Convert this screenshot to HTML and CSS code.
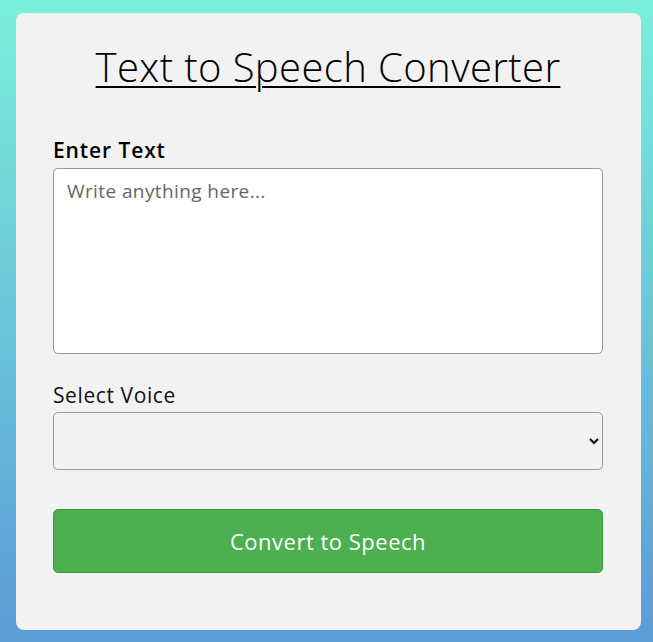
FILE: index.html
```html
<!DOCTYPE html>
<html lang="en">
<head>
<meta charset="utf-8">
<title>Text to Speech Converter</title>
<link rel="stylesheet" href="styles.css">
</head>
<body>
<main class="card">
  <h1 class="title">Text to Speech Converter</h1>
  <label class="label label-strong" for="text">Enter Text</label>
  <textarea id="text" class="textarea" placeholder="Write anything here..."></textarea>
  <label class="label label-voice" for="voice">Select Voice</label>
  <select id="voice" class="select"></select>
  <button class="button" type="button">Convert to Speech</button>
</main>
</body>
</html>
```
FILE: styles.css
```css
html, body {
  margin: 0;
  height: 100%;
}
body {
  background: linear-gradient(180deg, #7af0db 0%, #5a9bd8 100%);
  font-family: "Open Sans", sans-serif;
  padding: 13px 12px 12px 16px;
  box-sizing: border-box;
}
.card {
  background: #f2f2f2;
  border-radius: 8px;
  padding: 22px 38px 57px 37px;
  display: flex;
  flex-direction: column;
  box-sizing: border-box;
}
.card > * {
  flex-shrink: 0;
}
.title {
  margin: 0 0 39px;
  text-align: center;
  font-weight: 300;
  font-size: 40px;
  letter-spacing: 0.4px;
  line-height: 64px;
  color: #000;
  text-decoration: underline;
  text-decoration-thickness: 2px;
  text-underline-offset: 4px;
}
.label {
  font-size: 21px;
  letter-spacing: 0.6px;
  line-height: 24px;
  color: #111;
  margin-bottom: 6px;
}
.label-strong {
  font-weight: 600;
  letter-spacing: 0.9px;
  color: #000;
}
.label-voice {
  margin-bottom: 5px;
}
.textarea {
  height: 186px;
  box-sizing: border-box;
  border: 1px solid #999;
  border-radius: 5px;
  background: #fff;
  padding: 9px 13px;
  font-family: inherit;
  font-size: 19px;
  letter-spacing: 0.4px;
  resize: none;
  margin: 0 0 29px;
}
.textarea::placeholder {
  color: #666;
}
.select {
  height: 58px;
  box-sizing: border-box;
  border: 1px solid #999;
  border-radius: 5px;
  background: #f2f2f2;
  font-family: inherit;
  font-size: 18px;
  margin: 0 0 39px;
  padding-right: 6px;
}
.button {
  height: 64px;
  box-sizing: border-box;
  background: #4caf50;
  border: 1px solid #3f9a43;
  border-radius: 5px;
  color: #fff;
  font-family: inherit;
  font-size: 22px;
  letter-spacing: 0.5px;
}
```
